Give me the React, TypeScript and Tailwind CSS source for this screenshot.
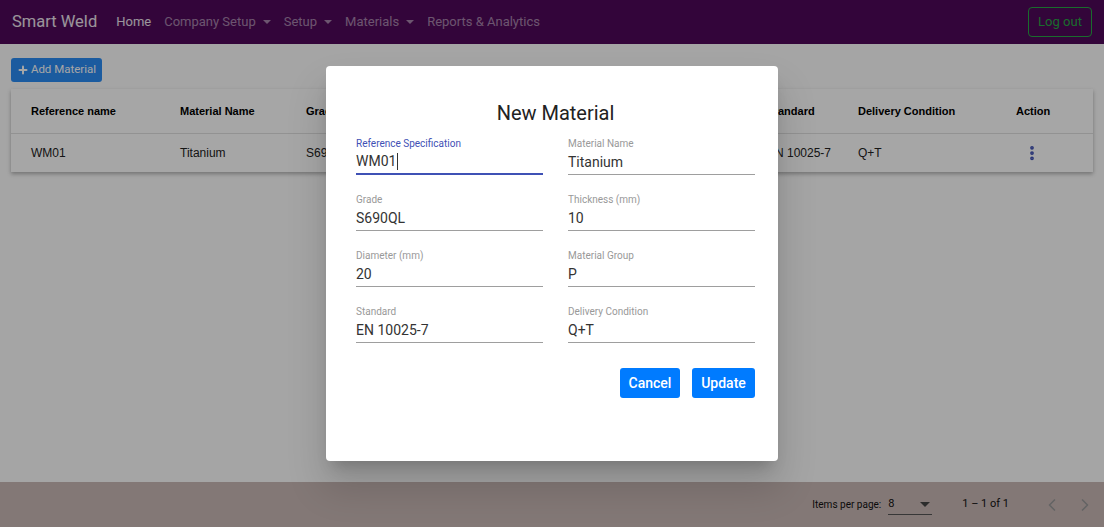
import React from 'react';
import { ChevronLeft, ChevronRight, EllipsisVertical, Plus } from 'lucide-react';

const columns = [
    { key: 'ref', label: 'Reference name', w: 'w-[149px]' },
    { key: 'name', label: 'Material Name', w: 'w-[126px]' },
    { key: 'grade', label: 'Grade', w: 'w-[114px]' },
    { key: 'thick', label: 'Thickness', w: 'w-[110px]' },
    { key: 'dia', label: 'Diameter', w: 'w-[110px]' },
    { key: 'group', label: 'Material Group', w: 'w-[127px]' },
    { key: 'std', label: 'Standard', w: 'w-[91px]' },
    { key: 'cond', label: 'Delivery Condition', w: 'w-[158px]' },
    { key: 'action', label: 'Action', w: 'w-[60px]' },
];

const row: Record<string, string> = {
    ref: 'WM01',
    name: 'Titanium',
    grade: 'S690QL',
    thick: '10',
    dia: '20',
    group: 'P',
    std: 'EN 10025-7',
    cond: 'Q+T',
};

const fields = [
    { label: 'Reference Specification', value: 'WM01', focused: true },
    { label: 'Material Name', value: 'Titanium' },
    { label: 'Grade', value: 'S690QL' },
    { label: 'Thickness (mm)', value: '10' },
    { label: 'Diameter (mm)', value: '20' },
    { label: 'Material Group', value: 'P' },
    { label: 'Standard', value: 'EN 10025-7' },
    { label: 'Delivery Condition', value: 'Q+T' },
];

const Caret = () => (
    <span className="ml-[7px] inline-block border-x-[4px] border-t-[4px] border-x-transparent border-t-current align-middle" />
);

export default function App() {
    return (
        <div className="relative w-full h-[527px] overflow-hidden bg-[#fdfdfd] flex flex-col font-['Roboto','Liberation_Sans',sans-serif]">

            {/* Navbar */}
            <nav className="h-[44px] shrink-0 bg-[#4f0859] flex items-center pl-[12px] pr-[12px]">
                <span className="text-[16.5px] text-white/90 mr-[19px]">Smart Weld</span>
                <div className="flex items-center gap-[13px] text-[13px]">
                    <span className="text-white/90">Home</span>
                    <span className="text-white/50 flex items-center">Company Setup<Caret /></span>
                    <span className="text-white/50 flex items-center">Setup<Caret /></span>
                    <span className="text-white/50 flex items-center">Materials<Caret /></span>
                    <span className="text-white/50">Reports &amp; Analytics</span>
                </div>
                <button className="ml-auto h-[30px] w-[64px] rounded-[4px] border border-[#28a745] text-[#28a745] text-[13px]">
                    Log out
                </button>
            </nav>

            {/* Content */}
            <main className="flex-1 px-[11px] pt-[14px]">
                <button className="h-[24px] w-[91px] justify-center rounded-[3px] bg-[#2a8cf5] text-white text-[11.5px] flex items-center gap-[2px]">
                    <Plus size={12} strokeWidth={4} />
                    Add Material
                </button>

                <div className="mt-[7px] bg-white shadow-[0_2px_4px_rgba(0,0,0,0.3)] font-['Liberation_Sans',Arial,sans-serif]">
                    <div className="h-[45px] flex items-center pl-[20px] border-b border-[#e0e0e0] text-[11px] font-bold text-black">
                        {columns.map((c) => (
                            <div key={c.key} className={c.w}>{c.label}</div>
                        ))}
                    </div>
                    <div className="h-[38px] flex items-center pl-[20px] text-[12px] text-[#222]">
                        {columns.map((c) => (
                            <div key={c.key} className={c.w}>
                                {c.key === 'action' ? (
                                    <EllipsisVertical size={18} strokeWidth={3} className="text-[#3f51b5] ml-[7px]" />
                                ) : row[c.key]}
                            </div>
                        ))}
                    </div>
                </div>
            </main>

            {/* Paginator */}
            <footer className="h-[45px] shrink-0 bg-[#cab9b6] flex items-center justify-end pr-[9px] text-[10px] text-[#111] whitespace-nowrap">
                <span>Items per page:</span>
                <div className="ml-[7px] w-[44px] h-[20px] border-b border-[#555] flex items-center justify-between text-[11px]">
                    <span>8</span>
                    <span className="mr-[2px] border-x-[5px] border-t-[5px] border-x-transparent border-t-[#444]" />
                </div>
                <span className="ml-[30px] text-[11px]">1 – 1 of 1</span>
                <ChevronLeft size={20} className="ml-[33px] text-[#9a9a9a]" />
                <ChevronRight size={20} className="ml-[13px] text-[#9a9a9a]" />
            </footer>

            {/* Backdrop + dialog */}
            <div className="absolute inset-0 bg-black/35 flex items-center justify-center">
                <div className="w-[452px] h-[395px] bg-white rounded-[4px] shadow-[0_11px_15px_-7px_rgba(0,0,0,0.2),0_24px_38px_3px_rgba(0,0,0,0.14)] pl-[30px] pr-[23px] pt-[35px] flex flex-col">
                    <h2 className="text-[20px] leading-[24px] text-center text-[#222] font-normal">New Material</h2>

                    <div className="mt-[13px] grid grid-cols-[187px_187px] gap-x-[25px] gap-y-[19px]">
                        {fields.map((f) => (
                            <div key={f.label} className="flex flex-col">
                                <span className={`text-[10px] leading-[12px] ${f.focused ? 'text-[#3f51b5]' : 'text-[#999]'}`}>{f.label}</span>
                                <div className={`h-[25px] flex items-center text-[14px] text-[#333] ${f.focused ? 'border-b-2 border-[#3f51b5]' : 'border-b border-[#9e9e9e]'}`}>
                                    {f.value}
                                    {f.focused && <span className="ml-[1px] w-px h-[17px] bg-[#333]" />}
                                </div>
                            </div>
                        ))}
                    </div>

                    <div className="mt-[25px] flex justify-end gap-[12px]">
                        <button className="h-[30px] w-[60px] rounded-[3px] bg-[#007bff] text-white text-[14px] font-medium">Cancel</button>
                        <button className="h-[30px] w-[63px] rounded-[3px] bg-[#007bff] text-white text-[14px] font-medium">Update</button>
                    </div>
                </div>
            </div>
        </div>
    );
}
